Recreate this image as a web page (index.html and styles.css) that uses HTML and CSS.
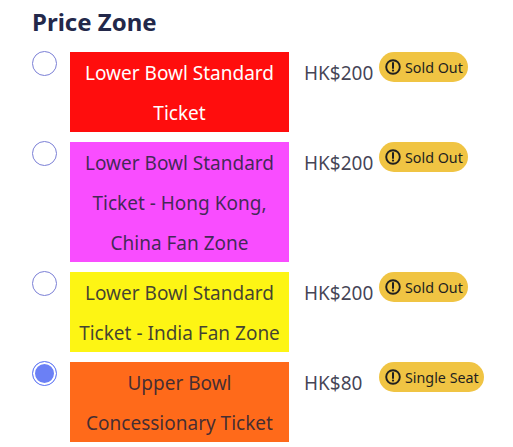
FILE: index.html
```html
<!DOCTYPE html>
<html lang="en">
<head>
<meta charset="utf-8">
<title>Price Zone</title>
<link rel="stylesheet" href="styles.css">
</head>
<body>
<main class="zone">
  <h2 class="title">Price Zone</h2>
  <ul class="list">
    <li class="row">
      <span class="radio"></span>
      <span class="name name-red"><span class="label">Lower Bowl Standard Ticket</span></span>
      <span class="price">HK$200</span>
      <span class="badge"><svg class="icon" viewBox="0 0 16 16"><circle cx="8" cy="8" r="6.8" fill="none" stroke="currentColor" stroke-width="1.9"/><path d="M8 4v5" stroke="currentColor" stroke-width="2" stroke-linecap="round"/><circle cx="8" cy="11.6" r="1.1" fill="currentColor"/></svg>Sold Out</span>
    </li>
    <li class="row">
      <span class="radio"></span>
      <span class="name name-pink"><span class="label">Lower Bowl Standard Ticket - Hong Kong, China Fan Zone</span></span>
      <span class="price">HK$200</span>
      <span class="badge"><svg class="icon" viewBox="0 0 16 16"><circle cx="8" cy="8" r="6.8" fill="none" stroke="currentColor" stroke-width="1.9"/><path d="M8 4v5" stroke="currentColor" stroke-width="2" stroke-linecap="round"/><circle cx="8" cy="11.6" r="1.1" fill="currentColor"/></svg>Sold Out</span>
    </li>
    <li class="row">
      <span class="radio"></span>
      <span class="name name-yellow"><span class="label">Lower Bowl Standard Ticket - India Fan Zone</span></span>
      <span class="price">HK$200</span>
      <span class="badge"><svg class="icon" viewBox="0 0 16 16"><circle cx="8" cy="8" r="6.8" fill="none" stroke="currentColor" stroke-width="1.9"/><path d="M8 4v5" stroke="currentColor" stroke-width="2" stroke-linecap="round"/><circle cx="8" cy="11.6" r="1.1" fill="currentColor"/></svg>Sold Out</span>
    </li>
    <li class="row">
      <span class="radio radio-on"></span>
      <span class="name name-orange"><span class="label">Upper Bowl Concessionary Ticket</span></span>
      <span class="price">HK$80</span>
      <span class="badge"><svg class="icon" viewBox="0 0 16 16"><circle cx="8" cy="8" r="6.8" fill="none" stroke="currentColor" stroke-width="1.9"/><path d="M8 4v5" stroke="currentColor" stroke-width="2" stroke-linecap="round"/><circle cx="8" cy="11.6" r="1.1" fill="currentColor"/></svg>Single Seat</span>
    </li>
  </ul>
</main>
</body>
</html>
```
FILE: styles.css
```css
html, body { margin: 0; padding: 0; background: #fff; }
body { font-family: "Noto Sans", "Open Sans", sans-serif; color: rgba(35, 35, 55, 0.85); }
.zone { padding: 6px 0 0 32px; }
.title { margin: 0 0 14px; font-size: 24px; line-height: 32px; font-weight: 700; color: #23284a; }
.list { list-style: none; margin: 0; padding: 0; display: flex; flex-direction: column; gap: 10px; }
.row { display: flex; align-items: flex-start; }
.radio { box-sizing: border-box; width: 25px; height: 25px; margin: -1px 13px 0 0; flex: none; border: 1px solid #7b7fd6; border-radius: 50%; background: #fff; }
.radio-on { background: #6b80f5; border: 1px solid #6b80f5; box-shadow: inset 0 0 0 2px #fff; }
.name { box-sizing: border-box; width: 219px; flex: none; padding: 0 8px; font-size: 19px; line-height: 40px; text-align: center; }
.label { display: block; transform: translateY(1px); }
.name-red { background: #ff0d0d; color: #fff; }
.name-pink { background: #f94dff; }
.name-yellow { background: #fdf514; }
.name-orange { background: #ff6a1a; }
.price { width: 74px; flex: none; margin-left: 15px; margin-right: 1px; font-size: 19px; line-height: 42px; }
.badge { display: inline-flex; align-items: center; gap: 4px; height: 30px; padding: 0 5px 0 6px; border-radius: 15px; background: #f0c443; color: #1f1f1f; font-size: 14.3px; white-space: nowrap; }
.icon { width: 16px; height: 16px; flex: none; }
```
